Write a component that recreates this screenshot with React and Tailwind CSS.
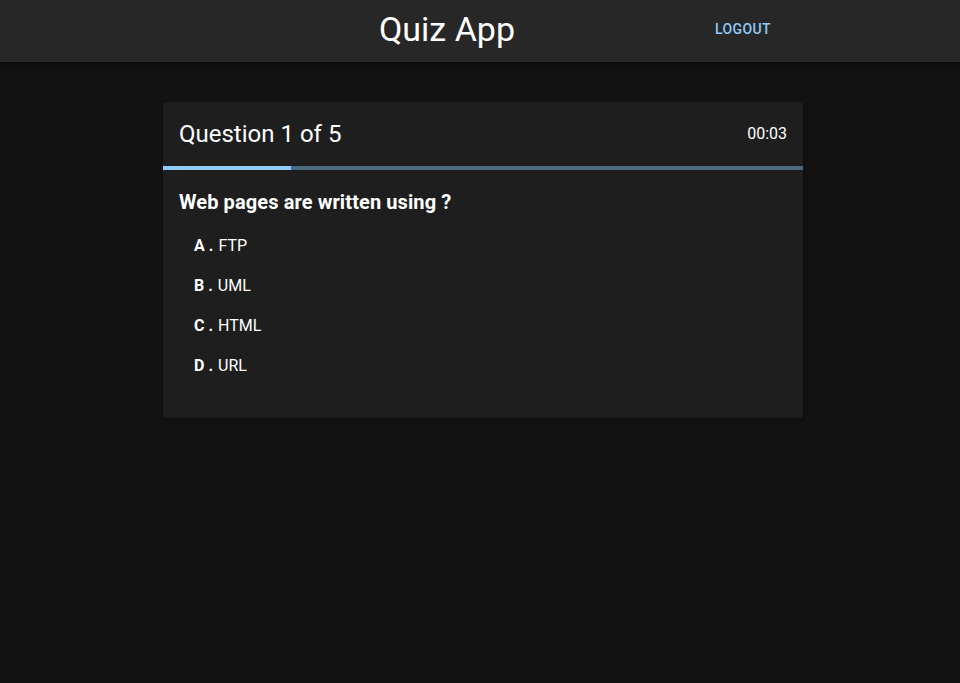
import { useState } from 'react';

const options = [
  { key: 'A', text: 'FTP' },
  { key: 'B', text: 'UML' },
  { key: 'C', text: 'HTML' },
  { key: 'D', text: 'URL' },
];

export default function App() {
  const [current] = useState(1);
  const total = 5;

  return (
    <div className="min-h-screen bg-[#121212] text-white" style={{ fontFamily: 'Roboto, "Liberation Sans", sans-serif' }}>
      {/* top bar */}
      <header className="h-[62px] bg-[#272727] shadow-[0_2px_4px_rgba(0,0,0,0.5)]">
        <div className="ml-[163px] flex h-full w-[640px] items-center px-6 pb-1">
          <h1 className="flex-1 text-center text-[34px] font-normal leading-none">Quiz App</h1>
          <button className="min-w-[64px] px-2 py-1.5 text-sm font-medium uppercase tracking-[0.4px] text-[#90caf9]">
            Logout
          </button>
        </div>
      </header>

      <main className="ml-[163px] mt-10 w-[640px]">
        <div className="overflow-hidden rounded bg-[#1e1e1e] shadow-md">
          <div className="flex h-16 items-center justify-between px-4">
            <h2 className="text-2xl font-normal">
              Question {current} of {total}
            </h2>
            <span className="text-base">00:03</span>
          </div>

          {/* progress */}
          <div className="h-1 bg-[#4a6a80]">
            <div className="h-full bg-[#90caf9]" style={{ width: `${(current / total) * 100}%` }} />
          </div>

          <div className="px-4 pt-4 pb-8">
            <p className="text-[20px] font-bold leading-8 tracking-[0.1px]">Web pages are written using ?</p>
            <ul className="mt-2">
              {options.map((o) => (
                <li key={o.key} className="flex h-10 items-center px-[15px] text-base">
                  <span className="font-bold">{o.key} .</span>
                  <span className="ml-[5px]">{o.text}</span>
                </li>
              ))}
            </ul>
          </div>
        </div>
      </main>
    </div>
  );
}
